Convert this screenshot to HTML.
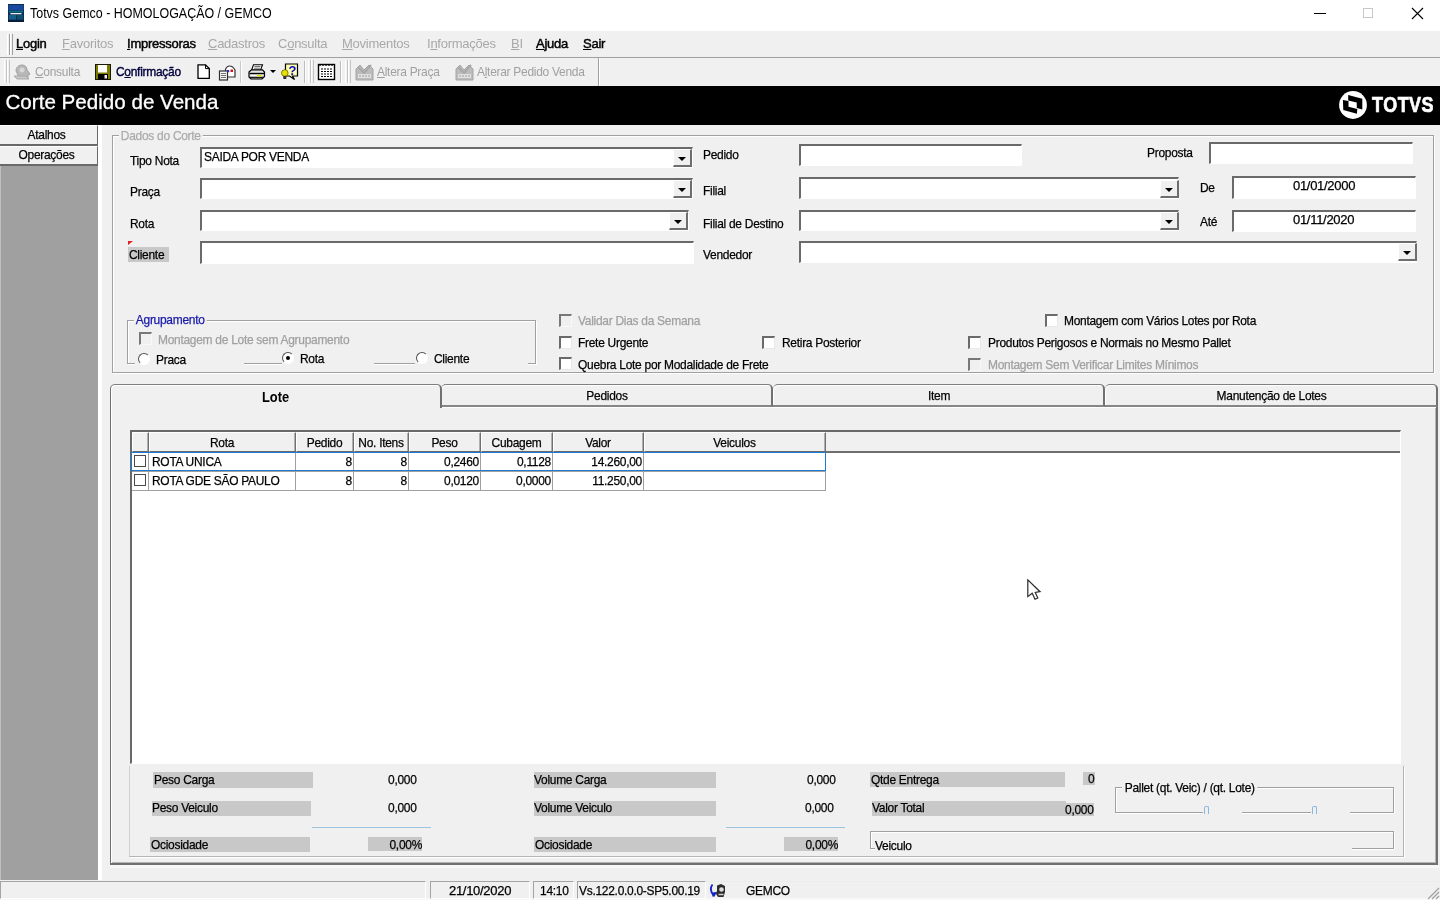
<!DOCTYPE html>
<html><head><meta charset="utf-8"><title>Totvs Gemco</title>
<style>
*{box-sizing:border-box;margin:0;padding:0}
html,body{width:1440px;height:900px;overflow:hidden;background:#f0f0f0;will-change:transform;font-family:"Liberation Sans",sans-serif;font-size:12px;color:#000}
.a{position:absolute;white-space:nowrap}
.t{position:absolute;white-space:nowrap;line-height:14px;font-size:13px;letter-spacing:-0.3px;transform:scaleX(.92);transform-origin:0 50%;-webkit-text-stroke:0.25px currentColor}
.t[style*="text-align:center"]{transform-origin:50% 50%}
.t[style*="text-align:right"]{transform-origin:100% 50%}
.dis{color:#a0a0a0}
.fld{position:absolute;background:#fff;border-top:2px solid #6a6a6a;border-left:2px solid #6a6a6a;border-right:1px solid #fff;border-bottom:1px solid #fff}
.dd{position:absolute;width:18.5px;height:18px;background:#f0f0f0;border:1px solid #fff;border-right:2px solid #6e6e6e;border-bottom:2px solid #6e6e6e}
.dd:after{content:"";position:absolute;left:4px;top:7px;border:4.5px solid transparent;border-top:4.5px solid #000;border-bottom:none}
.cb{position:absolute;width:13px;height:13px;background:#fff;border-top:2px solid #6a6a6a;border-left:2px solid #6a6a6a;border-right:1px solid #e8e8e8;border-bottom:1px solid #e8e8e8}
.cb.d{background:#f0f0f0;border-top-color:#787878;border-left-color:#787878;border-right-color:#f8f8f8;border-bottom-color:#f8f8f8}
.rb{position:absolute;width:12px;height:12px;border-radius:50%;background:#fff;border:1.5px solid #505050;border-right-color:#fff;border-bottom-color:#fff;transform:rotate(0deg)}
.gl{position:absolute;background:#c8c8c8;height:14px}
.m{position:absolute;top:6px;font-size:13px;line-height:16px;white-space:nowrap;letter-spacing:-0.25px}
.m.en{color:#000;-webkit-text-stroke:0.45px #000}
.m.dis{color:#a8a8a8}
.tb{position:absolute;top:7px;font-size:13px;line-height:14px;white-space:nowrap;letter-spacing:-0.3px;transform:scaleX(.92);transform-origin:0 50%}
.grip{position:absolute;top:2px;width:3px;height:23px;border-left:1px solid #fff;border-right:1px solid #c4c4c4}
.t.n{transform:none;letter-spacing:-0.3px}
</style></head><body>

<!-- TITLE BAR -->
<div class="a" id="titlebar" style="left:0;top:0;width:1440px;height:31px;background:#fff;z-index:1">
<svg class="a" style="left:8px;top:4px" width="16" height="18" viewBox="0 0 16 18"><rect x="0" y="0" width="16" height="18" fill="#0c3050"/><rect x="0.500" y="1" width="15" height="5" fill="#1a48a0"/><rect x="1" y="6.500" width="14" height="2" fill="#0e6a86"/><rect x="2.500" y="9" width="11" height="1.300" fill="#e8eef4"/><rect x="1" y="11" width="7" height="4.500" fill="#15608a"/><rect x="9" y="11" width="6" height="4.500" fill="#0e5070"/><rect x="0" y="16" width="16" height="2" fill="#0a1c3c"/></svg>
<div class="a" style="left:30px;top:5px;font-size:14px;line-height:16px;color:#000;transform:scaleX(.89);transform-origin:0 50%">Totvs Gemco - HOMOLOGAÇÃO / GEMCO</div>
<div class="a" style="left:1314px;top:13px;width:12px;height:1px;background:#000"></div>
<div class="a" style="left:1363px;top:8px;width:10px;height:10px;border:1px solid #c8c8c8"></div>
<svg class="a" style="left:1411px;top:7px" width="13" height="13" viewBox="0 0 13 13"><path d="M1 1L12 12M12 1L1 12" stroke="#000" stroke-width="1.1" fill="none"/></svg>
</div>
<!-- MENU BAR -->
<div class="a" id="menubar" style="left:0;top:30px;width:1440px;height:28px;background:#f0f0f0">
<div class="a" style="left:0;top:27px;width:1440px;height:1px;background:#a0a0a0"></div>
<div class="a" style="left:7px;top:4px;width:2px;height:21px;border-left:1px solid #fff;border-right:1px solid #a0a0a0;width:3px"></div>
<div class="a" style="left:10px;top:4px;width:3px;height:21px;border-left:1px solid #fff;border-right:1px solid #a0a0a0"></div>
<div class="m en" style="left:16px"><u>L</u>ogin</div>
<div class="m dis" style="left:62px"><u>F</u>avoritos</div>
<div class="m en" style="left:127px"><u>I</u>mpressoras</div>
<div class="m dis" style="left:208px"><u>C</u>adastros</div>
<div class="m dis" style="left:278px">C<u>o</u>nsulta</div>
<div class="m dis" style="left:342px"><u>M</u>ovimentos</div>
<div class="m dis" style="left:427px">I<u>n</u>formações</div>
<div class="m dis" style="left:511px"><u>B</u>I</div>
<div class="m en" style="left:536px"><u>A</u>juda</div>
<div class="m en" style="left:583px"><u>S</u>air</div>
</div>
<!-- TOOLBAR -->
<div class="a" id="toolbar" style="left:0;top:58px;width:1440px;height:28px;background:#f0f0f0">
<div class="a" style="left:3px;top:0;width:596px;height:28px;border-right:1px solid #a0a0a0;box-shadow:1px 0 0 #fff"></div>
<div class="grip" style="left:4px"></div><div class="grip" style="left:7px"></div>
<!-- consulta icon (disabled) -->
<svg class="a" style="left:13px;top:5px" width="20" height="18" viewBox="0 0 20 18"><path d="M3 8c0-4 3-6 6-6s5 2 5 5l3 4-2 1v3H5v-3z" fill="#b8b8b8" stroke="#a0a0a0"/><path d="M1 13h12l3 3H4z" fill="#c8c8c8" stroke="#a8a8a8"/><circle cx="9" cy="7" r="2.5" fill="#d8d8d8"/></svg>
<div class="tb dis" style="left:35px"><u>C</u>onsulta</div>
<!-- floppy -->
<svg class="a" style="left:95px;top:6px" width="16" height="16" viewBox="0 0 16 16"><rect x="0.5" y="0.5" width="15" height="15" fill="#7c7c00" stroke="#1a1a00"/><rect x="3" y="1" width="9" height="7.500" fill="#fff"/><rect x="3" y="10" width="10" height="5.500" fill="#000"/><rect x="9.500" y="11" width="2.500" height="3.500" fill="#f0f0f0"/></svg>
<div class="tb" style="left:116px;color:#00003c;-webkit-text-stroke:0.4px #00003c">C<u>o</u>nfirmação</div>
<!-- new doc -->
<svg class="a" style="left:197px;top:6px" width="14" height="16" viewBox="0 0 14 16"><path d="M1 0.800h7.500l3.800 3.800v9.800H1z" fill="#fff" stroke="#000" stroke-width="1.300"/><path d="M8.500 0.800v3.800h3.800" fill="none" stroke="#000" stroke-width="1"/></svg>
<!-- mail/house -->
<svg class="a" style="left:218px;top:5px" width="19" height="18" viewBox="0 0 19 18"><path d="M7.500 6.500C9 2 14 1.500 17 7v7H7.500z" fill="#fff" stroke="#303030" stroke-width="1.200"/><rect x="1.500" y="8" width="8" height="9" fill="#f8f8f8" stroke="#303030" stroke-width="1.200"/><path d="M3 10.500h5M3 12.500h5M3 14.500h5" stroke="#707070"/><rect x="9" y="7" width="2.200" height="2.200" fill="#2030d0"/><rect x="12.500" y="6.500" width="2.500" height="2.500" fill="#e01010"/></svg>
<div class="a" style="left:240px;top:3px;width:2px;height:22px;border-left:1px solid #c8c8c8;border-right:1px solid #fff"></div>
<!-- printer -->
<svg class="a" style="left:248px;top:6px" width="18" height="16" viewBox="0 0 18 16"><path d="M5.500 0.800h9l-2 5.500H3.500z" fill="#fff" stroke="#000" stroke-width="1.100"/><path d="M6.500 2.500h6M6 4.200h6" stroke="#606060" stroke-width="0.900"/><path d="M1 8l2.500-2.200h11L16.500 8v4.500L14 15H3l-2-2z" fill="#e4e4e4" stroke="#000" stroke-width="1.200"/><path d="M1.500 9.500h15" stroke="#000" stroke-width="1.400"/><rect x="3" y="11" width="10" height="1.600" fill="#fff"/><path d="M2 13.500h13" stroke="#202020" stroke-width="1.600"/><rect x="9" y="11" width="4.500" height="1.500" fill="#e8e800"/></svg>
<div class="a" style="left:270px;top:12px;border:3px solid transparent;border-top:3px solid #000;border-bottom:none"></div>
<!-- help bulb -->
<svg class="a" style="left:281px;top:5px" width="18" height="18" viewBox="0 0 18 18"><path d="M4.500 1h12v12h-5l2 3.500-5-3.500h-4z" fill="#ffffb0" stroke="#000" stroke-width="1.200"/><circle cx="3.800" cy="10" r="3.300" fill="#e8e000" stroke="#6a6400" stroke-width=".8"/><rect x="2.300" y="13" width="3" height="3" fill="#303030"/><text x="7.500" y="12" font-family="Liberation Sans" font-weight="bold" font-size="13" fill="#0808c8">?</text></svg>
<div class="a" style="left:304px;top:3px;width:2px;height:22px;border-left:1px solid #bcbcbc;border-right:1px solid #fff"></div>
<div class="grip" style="left:308px"></div><div class="grip" style="left:311px"></div>
<!-- calendar -->
<svg class="a" style="left:317px;top:4px" width="19" height="19" viewBox="0 0 19 19"><rect x="1.500" y="2.500" width="16" height="15" fill="#fff" stroke="#000" stroke-width="1.400"/><path d="M3 2v2M6 2v2M9 2v2M12 2v2M15 2v2" stroke="#000" stroke-width="1.2"/><path d="M4 7h11M4 9.5h11M4 12h11M4 14.5h11" stroke="#000" stroke-width="1" stroke-dasharray="2 1"/></svg>
<div class="a" style="left:340px;top:3px;width:2px;height:22px;border-left:1px solid #bcbcbc;border-right:1px solid #fff"></div>
<div class="grip" style="left:345px"></div><div class="grip" style="left:348px"></div>
<!-- altera praca -->
<svg class="a" style="left:355px;top:5px" width="19" height="18" viewBox="0 0 19 18"><path d="M1 17V6l4-4 4 5 5-5 4 4v11z" fill="#bcbcbc" stroke="#a4a4a4"/><path d="M3 4l6 6 7-8" stroke="#a8a8a8" stroke-width="2" fill="none"/><rect x="3" y="11" width="13" height="4" fill="#e0e0e0"/><path d="M4 13h11" stroke="#a0a0a0" stroke-dasharray="2 1"/></svg>
<div class="tb dis" style="left:377px"><u>A</u>ltera Praça</div>
<svg class="a" style="left:455px;top:5px" width="19" height="18" viewBox="0 0 19 18"><path d="M1 17V6l4-4 4 5 5-5 4 4v11z" fill="#bcbcbc" stroke="#a4a4a4"/><path d="M3 4l6 6 7-8" stroke="#a8a8a8" stroke-width="2" fill="none"/><rect x="3" y="11" width="13" height="4" fill="#e0e0e0"/><path d="M4 13h11" stroke="#a0a0a0" stroke-dasharray="2 1"/></svg>
<div class="tb dis" style="left:477px">A<u>l</u>terar Pedido Venda</div>
</div>
<!-- BANNER -->
<div class="a" id="banner" style="left:0;top:86px;width:1440px;height:39px;background:#000">
<div class="a" style="left:5.500px;top:4px;font-size:20.600px;line-height:24px;color:#fff;-webkit-text-stroke:0.300px #fff">Corte Pedido de Venda</div>
<svg class="a" style="left:1338.6px;top:5.2px" width="28" height="28" viewBox="0 0 28 28"><circle cx="14" cy="14" r="13.9" fill="#fff"/><path d="M9.2 4.1L23.3 7.7V18.6L17.8 17.1L17.7 11.6L9.2 9.4z" fill="#000"/><path d="M3.9 9.1L9.5 10.1V15.7L18.3 18.1L17.9 22.8L4.3 19.1z" fill="#000"/></svg>
<div class="a" style="left:1372px;top:7px;font-size:21.4px;line-height:25px;color:#fff;font-weight:bold;letter-spacing:0.6px;-webkit-text-stroke:0.7px #fff;transform:scaleX(0.84);transform-origin:0 0">TOTVS</div>
</div>
<!-- SIDEBAR -->
<div class="a" id="sidebar" style="left:0;top:125px;width:98px;height:755px;background:#a0a0a0">
<div class="a" style="left:0;top:0;width:98px;height:21px;background:#f0f0f0;border-right:1px solid #696969;border-bottom:2px solid #696969;border-top:1px solid #fff"></div>
<div class="a" style="left:0;top:21px;width:98px;height:20px;background:#f0f0f0;border-right:1px solid #696969;border-bottom:2px solid #696969;border-top:1px solid #fff"></div>
<div class="t" style="left:0;top:3px;width:93px;text-align:center">Atalhos</div>
<div class="t" style="left:0;top:23px;width:93px;text-align:center">Operações</div>
<div class="a" style="left:0;top:41px;width:1px;height:714px;background:#c0c0c0"></div>
</div>
<div class="a" style="left:98px;top:125px;width:4px;height:755px;background:#fff;z-index:2"></div>
<!-- MAIN -->
<div class="a" id="main" style="left:0;top:0;width:0;height:0">
<div class="a" style="left:112px;top:135px;width:1322px;height:238px;border:1px solid #a0a0a0;box-shadow:inset 1px 1px 0 #fff,1px 1px 0 #fff"></div>
<div class="t" style="left:119px;top:129px;background:#f0f0f0;padding:0 2px;color:#ababab">Dados do Corte</div>
<div class="t " style="left:130px;top:154px;">Tipo Nota</div>
<div class="fld" style="left:200px;top:147px;width:492.5px;height:21px"></div>
<div class="t " style="left:204px;top:150px;">SAIDA POR VENDA</div>
<div class="dd" style="left:673px;top:149px"></div>
<div class="t " style="left:130px;top:185px;">Praça</div>
<div class="fld" style="left:200px;top:178px;width:492.5px;height:21px"></div>
<div class="dd" style="left:673px;top:180px"></div>
<div class="t " style="left:130px;top:217px;">Rota</div>
<div class="fld" style="left:200px;top:210px;width:488.5px;height:21px"></div>
<div class="dd" style="left:669px;top:212px"></div>
<div class="a" style="left:128px;top:247px;width:41px;height:15px;background:#c8c8c8"></div>
<div class="a" style="left:128px;top:241px;width:0;height:0;border-top:4px solid #e02020;border-right:5px solid transparent"></div>
<div class="t " style="left:129px;top:248px;">Cliente</div>
<div class="fld" style="left:200px;top:241px;width:494px;height:23px"></div>
<div class="t " style="left:703px;top:148px;">Pedido</div>
<div class="fld" style="left:799px;top:144px;width:223px;height:22px"></div>
<div class="t " style="left:703px;top:184px;">Filial</div>
<div class="fld" style="left:799px;top:177px;width:379.5px;height:22px"></div>
<div class="dd" style="left:1160px;top:180px"></div>
<div class="t " style="left:703px;top:217px;">Filial de Destino</div>
<div class="fld" style="left:799px;top:210px;width:379.5px;height:21px"></div>
<div class="dd" style="left:1160px;top:212px"></div>
<div class="t " style="left:703px;top:248px;">Vendedor</div>
<div class="fld" style="left:799px;top:241px;width:617.5px;height:22px"></div>
<div class="dd" style="left:1398px;top:243px"></div>
<div class="t " style="left:1147px;top:146px;">Proposta</div>
<div class="fld" style="left:1209px;top:142px;width:204px;height:22px"></div>
<div class="t " style="left:1200px;top:181px;">De</div>
<div class="fld" style="left:1232px;top:176px;width:184px;height:23px"></div>
<div class="t n" style="left:1293px;top:179px;">01/01/2000</div>
<div class="t " style="left:1200px;top:215px;">Até</div>
<div class="fld" style="left:1232px;top:210px;width:184px;height:22px"></div>
<div class="t n" style="left:1293px;top:213px;">01/11/2020</div>
<div class="a" style="left:127px;top:320px;width:409px;height:44px;border:1px solid #a0a0a0;box-shadow:inset 1px 1px 0 #fff,1px 1px 0 #fff"></div>
<div class="a" style="left:135px;top:361px;width:109px;height:5px;background:#f0f0f0"></div>
<div class="a" style="left:282px;top:361px;width:92px;height:5px;background:#f0f0f0"></div>
<div class="a" style="left:415px;top:361px;width:113px;height:5px;background:#f0f0f0"></div>
<div class="t" style="left:134px;top:313px;background:#f0f0f0;padding:0 2px;color:#1818a8">Agrupamento</div>
<div class="cb d" style="left:139px;top:332px"></div>
<div class="t dis" style="left:158px;top:333px;">Montagem de Lote sem Agrupamento</div>
<div class="rb" style="left:138px;top:353px"></div>
<div class="t " style="left:156px;top:353px;">Praca</div>
<div class="rb" style="left:282px;top:352px"><i style="position:absolute;left:3px;top:3px;width:4px;height:4px;border-radius:50%;background:#000"></i></div>
<div class="t " style="left:300px;top:352px;">Rota</div>
<div class="rb" style="left:416px;top:352px"></div>
<div class="t " style="left:434px;top:352px;">Cliente</div>
<div class="cb d" style="left:559px;top:314px"></div>
<div class="t dis" style="left:578px;top:314px;">Validar Dias da Semana</div>
<div class="cb" style="left:559px;top:336px"></div>
<div class="t " style="left:578px;top:336px;">Frete Urgente</div>
<div class="cb" style="left:762px;top:336px"></div>
<div class="t " style="left:782px;top:336px;">Retira Posterior</div>
<div class="cb" style="left:559px;top:357px"></div>
<div class="t " style="left:578px;top:358px;">Quebra Lote por Modalidade de Frete</div>
<div class="cb" style="left:1045px;top:314px"></div>
<div class="t " style="left:1064px;top:314px;">Montagem com Vários Lotes por Rota</div>
<div class="cb" style="left:968px;top:336px"></div>
<div class="t " style="left:988px;top:336px;">Produtos Perigosos e Normais no Mesmo Pallet</div>
<div class="cb d" style="left:968px;top:358px"></div>
<div class="t dis" style="left:988px;top:358px;">Montagem Sem Verificar Limites Mínimos</div>
<div class="a" style="left:110px;top:406px;width:1328px;height:459px;border-left:1px solid #707070;border-right:2px solid #707070;border-bottom:2px solid #707070;box-shadow:inset 1px 0 0 #fff,inset -1px -1px 0 #b4b4b4"></div><div class="a" style="left:442px;top:407px;width:994px;height:1px;background:#fff"></div>
<div class="a" style="left:441px;top:384px;width:332px;height:23px;border-top:1px solid #808080;border-right:2px solid #707070;border-bottom:2px solid #868686;border-radius:5px 5px 0 0;box-shadow:inset 1px 1px 0 #fff"></div>
<div class="t" style="left:441px;top:389px;width:332px;text-align:center">Pedidos</div>
<div class="a" style="left:773px;top:384px;width:332px;height:23px;border-top:1px solid #808080;border-right:2px solid #707070;border-bottom:2px solid #868686;border-radius:5px 5px 0 0;box-shadow:inset 1px 1px 0 #fff"></div>
<div class="t" style="left:773px;top:389px;width:332px;text-align:center">Item</div>
<div class="a" style="left:1105px;top:384px;width:333px;height:23px;border-top:1px solid #808080;border-right:2px solid #707070;border-bottom:2px solid #868686;border-radius:5px 5px 0 0;box-shadow:inset 1px 1px 0 #fff"></div>
<div class="t" style="left:1105px;top:389px;width:333px;text-align:center">Manutenção de Lotes</div>
<div class="a" style="left:110px;top:384px;width:332px;height:24px;background:#f0f0f0;border-top:1px solid #808080;border-left:1px solid #707070;border-right:2px solid #707070;border-radius:5px 5px 0 0;box-shadow:inset 1px 1px 0 #fff"></div>
<div class="t" style="left:110px;top:390px;width:331px;text-align:center;font-weight:bold;font-size:14px;letter-spacing:0;-webkit-text-stroke:0">Lote</div>
<div class="a" style="left:130px;top:430px;width:1271px;height:334px;background:#fff;border-top:2px solid #696969;border-left:2px solid #696969;border-right:1px solid #fff;border-bottom:1px solid #fff"></div>
<div class="a" style="left:132px;top:432px;width:1268px;height:21px;background:#f0f0f0;border-bottom:2px solid #6e6e6e"></div>
<div class="a" style="left:132px;top:432px;width:17px;height:20px;border-left:1px solid #fff;border-top:1px solid #fff;border-right:1px solid #707070;border-bottom:1px solid #696969;background:#f0f0f0;box-shadow:inset -1px 0 0 #b0b0b0"></div>
<div class="a" style="left:149px;top:432px;width:147px;height:20px;border-left:1px solid #fff;border-top:1px solid #fff;border-right:1px solid #707070;border-bottom:1px solid #696969;background:#f0f0f0;box-shadow:inset -1px 0 0 #b0b0b0"></div>
<div class="t" style="left:149px;top:436px;width:146px;text-align:center">Rota</div>
<div class="a" style="left:296px;top:432px;width:58px;height:20px;border-left:1px solid #fff;border-top:1px solid #fff;border-right:1px solid #707070;border-bottom:1px solid #696969;background:#f0f0f0;box-shadow:inset -1px 0 0 #b0b0b0"></div>
<div class="t" style="left:296px;top:436px;width:57px;text-align:center">Pedido</div>
<div class="a" style="left:354px;top:432px;width:55px;height:20px;border-left:1px solid #fff;border-top:1px solid #fff;border-right:1px solid #707070;border-bottom:1px solid #696969;background:#f0f0f0;box-shadow:inset -1px 0 0 #b0b0b0"></div>
<div class="t" style="left:354px;top:436px;width:54px;text-align:center">No. Itens</div>
<div class="a" style="left:409px;top:432px;width:72px;height:20px;border-left:1px solid #fff;border-top:1px solid #fff;border-right:1px solid #707070;border-bottom:1px solid #696969;background:#f0f0f0;box-shadow:inset -1px 0 0 #b0b0b0"></div>
<div class="t" style="left:409px;top:436px;width:71px;text-align:center">Peso</div>
<div class="a" style="left:481px;top:432px;width:72px;height:20px;border-left:1px solid #fff;border-top:1px solid #fff;border-right:1px solid #707070;border-bottom:1px solid #696969;background:#f0f0f0;box-shadow:inset -1px 0 0 #b0b0b0"></div>
<div class="t" style="left:481px;top:436px;width:71px;text-align:center">Cubagem</div>
<div class="a" style="left:553px;top:432px;width:91px;height:20px;border-left:1px solid #fff;border-top:1px solid #fff;border-right:1px solid #707070;border-bottom:1px solid #696969;background:#f0f0f0;box-shadow:inset -1px 0 0 #b0b0b0"></div>
<div class="t" style="left:553px;top:436px;width:90px;text-align:center">Valor</div>
<div class="a" style="left:644px;top:432px;width:182px;height:20px;border-left:1px solid #fff;border-top:1px solid #fff;border-right:1px solid #707070;border-bottom:1px solid #696969;background:#f0f0f0;box-shadow:inset -1px 0 0 #b0b0b0"></div>
<div class="t" style="left:644px;top:436px;width:181px;text-align:center">Veiculos</div>
<div class="a" style="left:132px;top:452px;width:694px;height:20px;border-bottom:1px solid #a0a0a0;border-right:1px solid #a0a0a0"></div>
<div class="a" style="left:148px;top:452px;width:1px;height:19px;background:#a0a0a0"></div>
<div class="a" style="left:295px;top:452px;width:1px;height:19px;background:#a0a0a0"></div>
<div class="a" style="left:353px;top:452px;width:1px;height:19px;background:#a0a0a0"></div>
<div class="a" style="left:408px;top:452px;width:1px;height:19px;background:#a0a0a0"></div>
<div class="a" style="left:480px;top:452px;width:1px;height:19px;background:#a0a0a0"></div>
<div class="a" style="left:552px;top:452px;width:1px;height:19px;background:#a0a0a0"></div>
<div class="a" style="left:643px;top:452px;width:1px;height:19px;background:#a0a0a0"></div>
<div class="a" style="left:134px;top:455px;width:12px;height:12px;border:1px solid #4a4a4a;background:#fff"></div>
<div class="t " style="left:152px;top:455px;">ROTA UNICA</div>
<div class="t" style="left:272px;top:455px;width:80px;text-align:right">8</div>
<div class="t" style="left:327px;top:455px;width:80px;text-align:right">8</div>
<div class="t" style="left:399px;top:455px;width:80px;text-align:right">0,2460</div>
<div class="t" style="left:471px;top:455px;width:80px;text-align:right">0,1128</div>
<div class="t" style="left:562px;top:455px;width:80px;text-align:right">14.260,00</div>
<div class="a" style="left:132px;top:471px;width:694px;height:20px;border-bottom:1px solid #a0a0a0;border-right:1px solid #a0a0a0"></div>
<div class="a" style="left:148px;top:471px;width:1px;height:19px;background:#a0a0a0"></div>
<div class="a" style="left:295px;top:471px;width:1px;height:19px;background:#a0a0a0"></div>
<div class="a" style="left:353px;top:471px;width:1px;height:19px;background:#a0a0a0"></div>
<div class="a" style="left:408px;top:471px;width:1px;height:19px;background:#a0a0a0"></div>
<div class="a" style="left:480px;top:471px;width:1px;height:19px;background:#a0a0a0"></div>
<div class="a" style="left:552px;top:471px;width:1px;height:19px;background:#a0a0a0"></div>
<div class="a" style="left:643px;top:471px;width:1px;height:19px;background:#a0a0a0"></div>
<div class="a" style="left:134px;top:474px;width:12px;height:12px;border:1px solid #4a4a4a;background:#fff"></div>
<div class="t " style="left:152px;top:474px;">ROTA GDE SÃO PAULO</div>
<div class="t" style="left:272px;top:474px;width:80px;text-align:right">8</div>
<div class="t" style="left:327px;top:474px;width:80px;text-align:right">8</div>
<div class="t" style="left:399px;top:474px;width:80px;text-align:right">0,0120</div>
<div class="t" style="left:471px;top:474px;width:80px;text-align:right">0,0000</div>
<div class="t" style="left:562px;top:474px;width:80px;text-align:right">11.250,00</div>
<div class="a" style="left:130.500px;top:452.200px;width:695.500px;height:19.300px;border:1.600px solid #1a7cd6"></div>
<div class="a" style="left:129px;top:766px;width:1275px;height:91px;border:1px solid #b4b4b4;border-top:none;border-left-color:#d0d0d0;box-shadow:1px 1px 0 #fff"></div>
<div class="a" style="left:153px;top:772px;width:160px;height:16px;background:#c8c8c8"></div>
<div class="t " style="left:154px;top:773px;">Peso Carga</div>
<div class="t " style="left:388px;top:773px;">0,000</div>
<div class="a" style="left:152px;top:801px;width:159px;height:15px;background:#c8c8c8"></div>
<div class="t " style="left:152px;top:801px;">Peso Veiculo</div>
<div class="t " style="left:388px;top:801px;">0,000</div>
<div class="a" style="left:312px;top:827px;width:119px;height:1px;background:#9cc4dc"></div>
<div class="a" style="left:150px;top:837px;width:160px;height:15px;background:#c8c8c8"></div>
<div class="t " style="left:151px;top:838px;">Ociosidade</div>
<div class="a" style="left:368px;top:837px;width:54px;height:14px;background:#c8c8c8"></div>
<div class="t " style="left:342px;top:838px;width:80px;text-align:right">0,00%</div>
<div class="a" style="left:534px;top:772px;width:182px;height:16px;background:#c8c8c8"></div>
<div class="t " style="left:534px;top:773px;">Volume Carga</div>
<div class="t " style="left:807px;top:773px;">0,000</div>
<div class="a" style="left:534px;top:801px;width:182px;height:15px;background:#c8c8c8"></div>
<div class="t " style="left:534px;top:801px;">Volume Veiculo</div>
<div class="t " style="left:805px;top:801px;">0,000</div>
<div class="a" style="left:726px;top:827px;width:119px;height:1px;background:#9cc4dc"></div>
<div class="a" style="left:534px;top:837px;width:182px;height:15px;background:#c8c8c8"></div>
<div class="t " style="left:535px;top:838px;">Ociosidade</div>
<div class="a" style="left:784px;top:837px;width:54px;height:14px;background:#c8c8c8"></div>
<div class="t " style="left:758px;top:838px;width:80px;text-align:right">0,00%</div>
<div class="a" style="left:870px;top:772px;width:195px;height:15px;background:#c8c8c8"></div>
<div class="t " style="left:871px;top:773px;">Qtde Entrega</div>
<div class="a" style="left:1083px;top:772px;width:12px;height:13px;background:#c8c8c8"></div>
<div class="t " style="left:1088px;top:772px;">0</div>
<div class="a" style="left:872px;top:801px;width:194px;height:15px;background:#c8c8c8"></div>
<div class="t " style="left:872px;top:801px;">Valor Total</div>
<div class="a" style="left:1065px;top:803px;width:29px;height:13px;background:#c8c8c8"></div>
<div class="t " style="left:1065px;top:803px;">0,000</div>
<div class="a" style="left:870px;top:831px;width:524px;height:18px;border:1px solid #a0a0a0;box-shadow:inset 1px 1px 0 #fff,1px 1px 0 #fff"></div>
<div class="a" style="left:875px;top:846px;width:477px;height:5px;background:#f0f0f0"></div>
<div class="t " style="left:875px;top:839px;background:#f0f0f0">Veiculo</div>
<div class="a" style="left:1115px;top:787px;width:279px;height:26px;border:1px solid #a0a0a0;box-shadow:inset 1px 1px 0 #fff,1px 1px 0 #fff"></div>
<div class="a" style="left:1203px;top:810px;width:39px;height:5px;background:#f0f0f0"></div>
<div class="a" style="left:1311px;top:810px;width:39px;height:5px;background:#f0f0f0"></div>
<div class="t " style="left:1122px;top:781px;background:#f0f0f0;padding:0 3px">Pallet (qt. Veic) / (qt. Lote)</div>
<div class="a" style="left:1204px;top:806px;width:5px;height:8px;border:1px solid #8cb8e0;border-bottom:none;border-radius:2px 2px 0 0"></div>
<div class="a" style="left:1312px;top:806px;width:5px;height:8px;border:1px solid #8cb8e0;border-bottom:none;border-radius:2px 2px 0 0"></div>
<svg class="a" style="left:1027px;top:578.500px;z-index:9" width="15" height="22" viewBox="0 0 15 22"><path d="M0.800 0.900V17.600L5.200 14.200L8 20.200L10.800 19L8.200 13.400L13 12.700z" fill="#fff" stroke="#2a2a2a" stroke-width="1.200" stroke-linejoin="miter"/></svg>
</div>
<div class="a" style="left:110px;top:865px;width:1330px;height:3px;background:#f7f7f7"></div>
<!-- STATUS -->
<div class="a" id="status" style="left:0;top:880px;width:1440px;height:20px;background:#f0f0f0">
<div class="a" style="left:706px;top:1px;width:734px;height:1px;background:#ececec"></div>
<div class="a" style="left:0;top:18px;width:1440px;height:2px;background:#f8f8f8"></div>
<div class="a" style="left:0px;top:1px;width:426px;height:18px;border-top:1px solid #a4a4a4;border-left:1px solid #a4a4a4;border-right:1px solid #fff;border-bottom:1px solid #fff"></div><div class="a" style="left:430px;top:1px;width:100px;height:18px;border-top:1px solid #a4a4a4;border-left:1px solid #a4a4a4;border-right:1px solid #fff;border-bottom:1px solid #fff"></div><div class="a" style="left:533px;top:1px;width:41px;height:18px;border-top:1px solid #a4a4a4;border-left:1px solid #a4a4a4;border-right:1px solid #fff;border-bottom:1px solid #fff"></div><div class="a" style="left:577px;top:1px;width:129px;height:18px;border-top:1px solid #a4a4a4;border-left:1px solid #a4a4a4;border-right:1px solid #fff;border-bottom:1px solid #fff"></div>
<div class="t n" style="left:449px;top:4px">21/10/2020</div>
<div class="t" style="left:540px;top:4px">14:10</div>
<div class="t" style="left:579px;top:4px">Vs.122.0.0.0-SP5.00.19</div>
<svg class="a" style="left:709px;top:3px" width="18" height="16" viewBox="0 0 18 16"><path d="M3.500 1.500C1 5 1.500 9 5 12.500l1.500-2.500-3 .5 1 3" fill="none" stroke="#1424c8" stroke-width="1.800"/><path d="M8 2.500l4-1.500 4 2v6l-1.500 5H9l-2-3 1-3z" fill="#2c2c2c"/><circle cx="12.500" cy="6.500" r="2.300" fill="#dcdcdc"/><path d="M9.500 11.500h5" stroke="#d0d0d0" stroke-width="1.500"/></svg>
<div class="t" style="left:746px;top:4px">GEMCO</div>
<svg class="a" style="left:1427px;top:7px" width="13" height="13" viewBox="0 0 13 13"><path d="M12 1L1 12M12 5L5 12M12 9L9 12" stroke="#a0a0a0" stroke-width="1.200"/></svg>
</div>

</body></html>
